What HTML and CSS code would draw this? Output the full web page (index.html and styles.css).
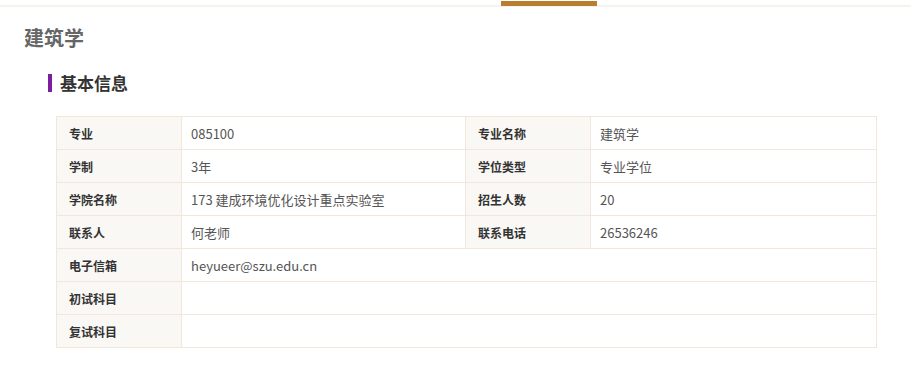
FILE: index.html
```html
<!DOCTYPE html>
<html lang="zh-CN">
<head>
<meta charset="utf-8">
<title>建筑学</title>
<link rel="stylesheet" href="styles.css">
</head>
<body>
<div class="tabs">
  <span class="tab-indicator"></span>
</div>
<main class="page">
  <h1 class="major-title">建筑学</h1>
  <section class="info">
    <h2 class="section-title">基本信息</h2>
    <table class="info-table">
      <colgroup>
        <col class="col-label">
        <col class="col-value col-value-first">
        <col class="col-label">
        <col class="col-value">
      </colgroup>
      <tr>
        <th>专业</th><td>085100</td>
        <th>专业名称</th><td>建筑学</td>
      </tr>
      <tr>
        <th>学制</th><td>3年</td>
        <th>学位类型</th><td>专业学位</td>
      </tr>
      <tr>
        <th>学院名称</th><td>173 建成环境优化设计重点实验室</td>
        <th>招生人数</th><td>20</td>
      </tr>
      <tr>
        <th>联系人</th><td>何老师</td>
        <th>联系电话</th><td>26536246</td>
      </tr>
      <tr>
        <th>电子信箱</th><td colspan="3">heyueer@szu.edu.cn</td>
      </tr>
      <tr>
        <th>初试科目</th><td colspan="3"></td>
      </tr>
      <tr>
        <th>复试科目</th><td colspan="3"></td>
      </tr>
    </table>
  </section>
</main>
</body>
</html>
```

FILE: styles.css
```css
* { box-sizing: border-box; }

html, body {
  margin: 0;
  padding: 0;
  background: #fff;
  font-family: "Microsoft YaHei", "Noto Sans CJK SC", "Noto Sans", sans-serif;
  color: #333;
}

/* top tab strip with the active indicator */
.tabs {
  display: flex;
  height: 7px;
  padding-top: 1px;
  border-bottom: 2px solid #f6f2ee;
}
.tab-indicator {
  display: block;
  width: 96px;
  height: 5px;
  margin-left: 501px;
  background: #b97d2f;
}

.page {
  padding: 0 35px 0 24px;
}

.major-title {
  margin: 16px 0 0;
  font-size: 20px;
  line-height: 30px;
  font-weight: bold;
  color: #666;
}

.info {
  padding-left: 24px;
}

.section-title {
  margin: 21px 0 0;
  padding-left: 8px;
  border-left: 4px solid #7b1f9e;
  font-size: 17px;
  line-height: 18px;
  font-weight: bold;
  color: #333;
}

.info-table {
  margin: 24px 0 0 8px;
  width: 820px;
  border-collapse: collapse;
  table-layout: fixed;
}
.col-label { width: 125px; }
.col-value { width: 286px; }
.col-value-first { width: 284px; }

.info-table th,
.info-table td {
  height: 33px;
  border: 1px solid #f3e6da;
  font-size: 12px;
  text-align: left;
  vertical-align: middle;
}
.info-table th {
  padding: 0 0 0 12px;
  background: #faf8f5;
  font-weight: bold;
  color: #333;
}
.info-table td {
  padding: 0 0 0 9px;
  font-size: 13px;
  color: #555;
}
```
